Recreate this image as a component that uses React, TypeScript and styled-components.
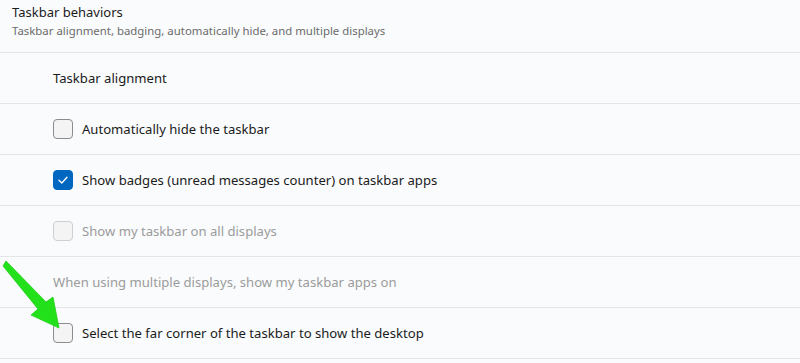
import React from "react";
import styled, { createGlobalStyle } from "styled-components";

const Global = createGlobalStyle`
  html, body { margin: 0; padding: 0; background: #fafbfd; }
  body { font-family: "Segoe UI", "Noto Sans", "Open Sans", sans-serif; }
`;

const Page = styled.div`
  position: relative;
  width: 800px;
  height: 363px;
  overflow: hidden;
  background: #fafbfd;
`;

const Header = styled.div`
  height: 53px;
  box-sizing: border-box;
  padding: 3px 0 0 12px;
  border-bottom: 1px solid #e4e5e8;
  display: flex;
  flex-direction: column;
`;

const Title = styled.div`
  font-size: 13px;
  color: #1b1b1b;
  line-height: 19px;
`;

const Subtitle = styled.div`
  font-size: 11.4px;
  color: #6b6b6b;
  line-height: 16px;
  margin-top: 1px;
`;

const Row = styled.div`
  height: 51px;
  box-sizing: border-box;
  border-bottom: 1px solid #e4e5e8;
  display: flex;
  align-items: center;
  gap: 9px;
  padding-left: 53px;
`;

const Label = styled.span<{ $muted?: boolean }>`
  font-size: 13.1px;
  color: ${(p) => (p.$muted ? "#9b9b9b" : "#1b1b1b")};
`;

const Box = styled.span<{ $checked?: boolean; $disabled?: boolean }>`
  width: 20px;
  height: 20px;
  box-sizing: border-box;
  border-radius: 4px;
  display: inline-flex;
  align-items: center;
  justify-content: center;
  flex: none;
  background: ${(p) => (p.$checked ? "#0067c0" : "#f4f4f5")};
  border: 1px solid
    ${(p) => (p.$checked ? "#0067c0" : p.$disabled ? "#cfcfd1" : "#8c8c8e")};
`;

const Arrow = styled.svg`
  position: absolute;
  left: 0;
  top: 0;
  pointer-events: none;
`;

function Check({ checked, disabled }: { checked?: boolean; disabled?: boolean }) {
  return (
    <Box $checked={checked} $disabled={disabled}>
      {checked && (
        <svg width="12" height="12" viewBox="0 0 12 12">
          <path d="M2 6.3 L4.8 9 L10 3.2" fill="none" stroke="#fff" strokeWidth="1.3" strokeLinecap="round" strokeLinejoin="round" />
        </svg>
      )}
    </Box>
  );
}

export default function App() {
  return (
    <>
      <Global />
      <Page>
        <Header>
          <Title>Taskbar behaviors</Title>
          <Subtitle>Taskbar alignment, badging, automatically hide, and multiple displays</Subtitle>
        </Header>
        <Row>
          <Label>Taskbar alignment</Label>
        </Row>
        <Row>
          <Check />
          <Label>Automatically hide the taskbar</Label>
        </Row>
        <Row>
          <Check checked />
          <Label>Show badges (unread messages counter) on taskbar apps</Label>
        </Row>
        <Row>
          <Check disabled />
          <Label $muted>Show my taskbar on all displays</Label>
        </Row>
        <Row>
          <Label $muted>When using multiple displays, show my taskbar apps on</Label>
        </Row>
        <Row>
          <Check />
          <Label>Select the far corner of the taskbar to show the desktop</Label>
        </Row>
        <Arrow width="800" height="363" viewBox="0 0 800 363">
          <polygon
            points="6,261 46,302 53,297 59,328 31,315 38,309 3,266"
            fill="#22e01a"
            stroke="#1fcf18"
            strokeWidth="0.8"
            strokeLinejoin="round"
          />
        </Arrow>
      </Page>
    </>
  );
}
